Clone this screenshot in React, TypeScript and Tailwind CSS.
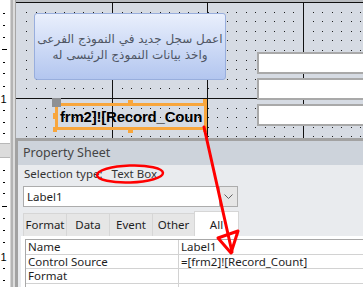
import React from "react";

function Ruler() {
  const short = [13, 25, 37, 62, 73, 86, 110, 122, 133, 170, 182, 193, 218, 230, 242, 268, 280];
  const long = [49, 206];
  return (
    <svg width="10" height="287" className="block shrink-0">
      <rect width="10" height="287" fill="#ffffff" />
      {short.map((y) => (
        <rect key={y} x="3" y={y} width="2" height="1" fill="#000" />
      ))}
      {long.map((y) => (
        <rect key={y} x="2" y={y} width="5" height="1" fill="#000" />
      ))}
      <text x="0.5" y="103" fontSize="11" fontFamily="Liberation Sans, sans-serif" fill="#000">1</text>
      <text x="0.5" y="261" fontSize="11" fontFamily="Liberation Sans, sans-serif" fill="#000">1</text>
      <rect x="0" y="143" width="10" height="15" fill="#dcdcdc" />
      <rect x="0" y="143" width="10" height="1" fill="#b8b8b8" />
      <rect x="0" y="157" width="10" height="1" fill="#b8b8b8" />
    </svg>
  );
}

function Grid() {
  const xs: number[] = [];
  for (let k = 1; k <= 36; k++) xs.push(Math.round(0.5 + 9.55 * k));
  const ys: number[] = [];
  for (let j = 1; j <= 14; j++) ys.push(Math.round(2 + 9.6 * j));
  return (
    <svg width="347" height="138" className="absolute left-0 top-0 block">
      <rect x="0" y="0" width="347" height="2" fill="#b9bcc0" />
      {ys.map((y) =>
        xs.map((x) => <rect key={x + "-" + y} x={x} y={y} width="1" height="1" fill="#1e1e1e" />)
      )}
      <rect x="0" y="2" width="347" height="1" fill="#111" />
      <rect x="0" y="98" width="347" height="1" fill="#111" />
      <rect x="96" y="2" width="1" height="136" fill="#111" />
      <rect x="191" y="2" width="1" height="136" fill="#111" />
      <rect x="287" y="2" width="1" height="136" fill="#111" />
    </svg>
  );
}

export default function App() {
  const ui = "font-[family-name:'Noto_Sans',sans-serif]";
  return (
    <div className={`relative flex h-[287px] w-[363px] overflow-hidden bg-white ${ui}`}>
      {/* left ruler + separators */}
      <Ruler />
      <div className="w-[1px] shrink-0 bg-[#d4d4d4]" />
      <div className="w-[2px] shrink-0 bg-[#b4b4b4]" />
      <div className="w-[2px] shrink-0 bg-[#dcdcdc]" />

      {/* main column */}
      <div className="flex w-[348px] flex-col">
        {/* design surface */}
        <div className="flex h-[138px] shrink-0 border-l border-[#a6a6a6]">
          <div className="relative h-[138px] w-[347px] overflow-hidden bg-[#d6dbe3]">
            <Grid />

            {/* label */}
            <div className="absolute left-[18px] top-[13px] flex h-[67px] w-[192px] items-center justify-center rounded-[3px] border border-[#98aedd] bg-gradient-to-b from-[#e9effc] to-[#b3c6ef]">
              <div
                dir="rtl"
                className="text-center font-[family-name:'DejaVu_Sans',sans-serif] text-[12px] leading-[16px] text-[#4f5664]"
              >
                <div>اعمل سجل جديد في النموذج الفرعى</div>
                <div>واخذ بيانات النموذج الرئيسى له</div>
              </div>
            </div>

            {/* text boxes */}
            <div className="absolute left-[241px] top-[52px] h-[22px] w-[130px] border-2 border-[#a9a9a9] bg-white" />
            <div className="absolute left-[241px] top-[78px] h-[22px] w-[130px] border-2 border-[#a9a9a9] bg-white" />
            <div className="absolute left-[241px] top-[104px] h-[22px] w-[130px] border-2 border-[#a9a9a9] bg-white" />

            {/* selected control */}
            <div className="absolute left-[39px] top-[103px] flex h-[27px] w-[152px] items-center overflow-hidden border-[3px] border-[#f8a63c] pl-[2px]">
              <span className="whitespace-nowrap font-[family-name:'Liberation_Sans',sans-serif] text-[15px] font-bold leading-none tracking-[-0.2px] text-black">
                frm2]![Record_Coun
              </span>
            </div>
            <div className="absolute left-[36px] top-[98px] h-[9px] w-[9px] bg-[#8e9093]" />
            <div className="absolute left-[112px] top-[100px] h-[4px] w-[5px] bg-[#f8a63c]" />
            <div className="absolute left-[112px] top-[129px] h-[4px] w-[5px] bg-[#f8a63c]" />
            <div className="absolute left-[37px] top-[113px] h-[6px] w-[4px] bg-[#f8a63c]" />
            <div className="absolute left-[187px] top-[99px] h-[5px] w-[4px] bg-[#f8a63c]" />
            <div className="absolute left-[187px] top-[127px] h-[5px] w-[4px] bg-[#f8a63c]" />
            <div className="absolute left-[37px] top-[127px] h-[5px] w-[4px] bg-[#f8a63c]" />
          </div>
        </div>

        {/* property sheet */}
        <div className="flex flex-1 flex-col border-l-[3px] border-t-[3px] border-[#a2a2a2] bg-[#e9ebee] text-[11.5px] text-[#1e1e1e]">
          <div className="flex h-[24px] shrink-0 items-center bg-[#cdd3db] pl-[5px] text-[12.5px] text-[#444]">
            Property Sheet
          </div>
          <div className="flex h-[18px] shrink-0 items-center pl-[6px] text-[#333]">
            <span>Selection type:</span>
            <span className="ml-[9px]">Text Box</span>
          </div>
          <div className="ml-[5px] mt-[3px] flex h-[21px] w-[215px] shrink-0 border border-[#acacac] bg-white">
            <div className="flex flex-1 items-center pl-[3px]">Label1</div>
            <div className="flex w-[18px] items-center justify-center border-l border-[#acacac] bg-[#e6e6e6]">
              <svg width="9" height="6" viewBox="0 0 9 6">
                <path d="M0.5 0.5 L4.5 4.5 L8.5 0.5" fill="none" stroke="#606060" strokeWidth="1" />
              </svg>
            </div>
          </div>
          <div className="ml-[5px] mt-[4px] flex h-[25px] shrink-0 items-end">
            <div className="flex h-[23px] w-[43px] items-center justify-center border border-r-0 border-b-0 border-[#d6d6d6] bg-[#e6e6e6]">Format</div>
            <div className="flex h-[23px] w-[43px] items-center justify-center border border-r-0 border-b-0 border-[#d6d6d6] bg-[#e6e6e6]">Data</div>
            <div className="flex h-[23px] w-[43px] items-center justify-center border border-r-0 border-b-0 border-[#d6d6d6] bg-[#e6e6e6]">Event</div>
            <div className="flex h-[23px] w-[42px] items-center justify-center border border-r-0 border-b-0 border-[#d6d6d6] bg-[#e6e6e6]">Other</div>
            <div className="flex h-[25px] w-[45px] items-center justify-center border border-b-0 border-[#d6d6d6] bg-white pt-[1px]">All</div>
          </div>
          <div className="ml-[3px] flex-1 bg-white pl-[4px] pt-[3px]">
            <div className="border-l border-t border-[#a8a8a8]">
              <div className="flex h-[15px] border-b border-[#d2d2d2]">
                <div className="flex w-[153px] items-center border-r border-[#d2d2d2] pl-[2px]">Name</div>
                <div className="flex flex-1 items-center pl-[2px]">Label1</div>
              </div>
              <div className="flex h-[14px] border-b border-[#d2d2d2]">
                <div className="flex w-[153px] items-center border-r border-[#d2d2d2] pl-[2px]">Control Source</div>
                <div className="flex flex-1 items-center pl-[2px]">=[frm2]![Record_Count]</div>
              </div>
              <div className="flex h-[15px] border-b border-[#d2d2d2]">
                <div className="flex w-[153px] items-center border-r border-[#d2d2d2] pl-[2px]">Format</div>
                <div className="flex flex-1 items-center pl-[2px]"></div>
              </div>
              <div className="flex h-[15px]">
                <div className="w-[153px] border-r border-[#d2d2d2]" />
                <div className="flex-1" />
              </div>
            </div>
          </div>
        </div>
      </div>

      {/* red annotations */}
      <svg width="363" height="287" className="pointer-events-none absolute left-0 top-0">
        <ellipse cx="130" cy="174" rx="33" ry="8.5" fill="none" stroke="#ff0000" strokeWidth="2.5" transform="rotate(-2 130 174)" />
        <path d="M204 127 L232 252" fill="none" stroke="#ff0000" strokeWidth="3" strokeLinecap="round" />
        <path d="M218 238 L238 231 L231 253 Z" fill="none" stroke="#ff0000" strokeWidth="3" strokeLinejoin="round" />
      </svg>
    </div>
  );
}
